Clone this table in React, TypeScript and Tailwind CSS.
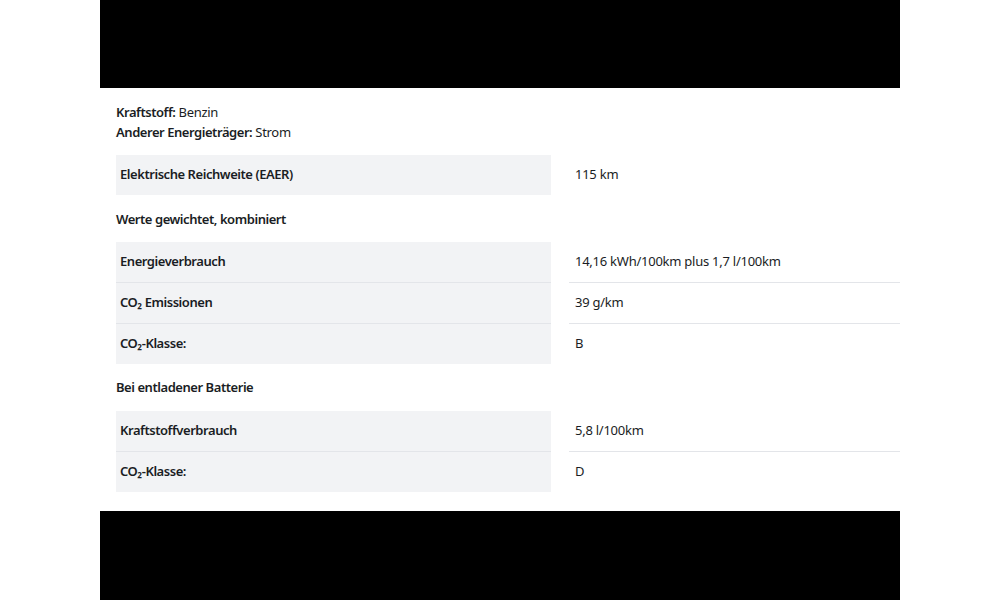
import React from "react";

type Row = { label: React.ReactNode; value: string };

function Table({ rows }: { rows: Row[] }) {
  return (
    <div className="flex flex-col">
      {rows.map((r, i) => {
        const last = i === rows.length - 1;
        return (
          <div key={i} className="flex">
            <div
              className={
                last
                  ? "w-[435px] h-[40px] bg-[#f2f3f5] pl-[4px] flex items-center font-semibold tracking-[-0.45px]"
                  : "w-[435px] h-[41px] bg-[#f2f3f5] pl-[4px] flex items-center font-semibold tracking-[-0.45px] border-b border-[#e3e5e9]"
              }
            >
              {r.label}
            </div>
            <div className="flex-1 pl-[18px]">
              <div
                className={
                  last
                    ? "h-[40px] pl-[6px] flex items-center tracking-[-0.25px]"
                    : "h-[41px] pl-[6px] flex items-center tracking-[-0.25px] border-b border-[#e3e5e9]"
                }
              >
                {r.value}
              </div>
            </div>
          </div>
        );
      })}
    </div>
  );
}

export default function App() {
  return (
    <div
      className="w-[1000px] h-[600px] bg-white flex justify-center text-[13px] text-[#1a1d24]"
      style={{ fontFamily: '"Noto Sans", "Open Sans", sans-serif' }}
    >
      <div className="w-[800px] flex flex-col">
        <div className="h-[88px] bg-black" />
        <div className="flex-1 pl-[16px] pt-[14px]">
          <div className="leading-[20px] tracking-[-0.3px]">
            <div>
              <span className="font-semibold tracking-[-0.45px]">Kraftstoff:</span> Benzin
            </div>
            <div>
              <span className="font-semibold tracking-[-0.45px]">Anderer Energieträger:</span> Strom
            </div>
          </div>
          <div className="mt-[13px]">
            <Table rows={[{ label: "Elektrische Reichweite (EAER)", value: "115 km" }]} />
          </div>
          <div className="mt-[14px] leading-[20px] font-semibold tracking-[-0.45px]">
            Werte gewichtet, kombiniert
          </div>
          <div className="mt-[13px]">
            <Table
              rows={[
                { label: "Energieverbrauch", value: "14,16 kWh/100km plus 1,7 l/100km" },
                { label: "CO₂ Emissionen", value: "39 g/km" },
                { label: "CO₂-Klasse:", value: "B" },
              ]}
            />
          </div>
          <div className="mt-[13px] leading-[20px] font-semibold tracking-[-0.45px]">
            Bei entladener Batterie
          </div>
          <div className="mt-[14px]">
            <Table
              rows={[
                { label: "Kraftstoffverbrauch", value: "5,8 l/100km" },
                { label: "CO₂-Klasse:", value: "D" },
              ]}
            />
          </div>
        </div>
        <div className="h-[89px] bg-black" />
      </div>
    </div>
  );
}
